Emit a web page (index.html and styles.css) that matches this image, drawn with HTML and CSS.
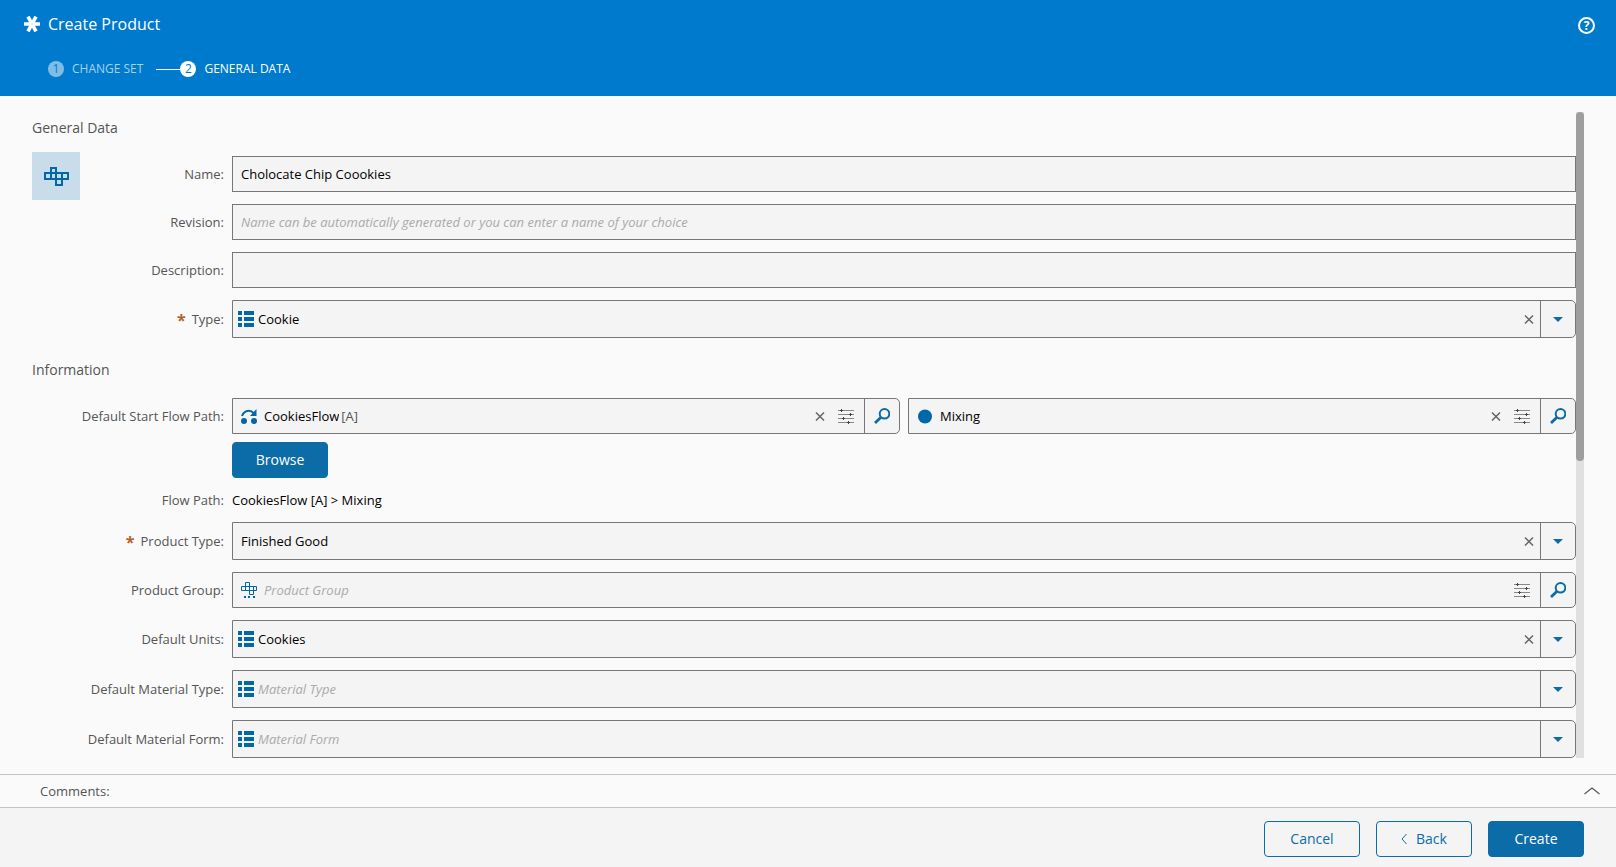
FILE: index.html
```
<!DOCTYPE html>
<html lang="en">
<head>
    <meta charset="UTF-8">
    <title>Create Product</title>
    <link rel="stylesheet" href="styles.css">
</head>
<body>
    <!-- shared icons -->
    <svg class="sprite" aria-hidden="true">
        <symbol id="list" viewBox="0 0 16 16">
            <path fill="#0067a8" d="M0 0h4v4H0zM6 0h10v4H6zM0 6h4v4H0zM6 6h10v4H6zM0 12h4v4H0zM6 12h10v4H6z"/>
        </symbol>
        <symbol id="close" viewBox="0 0 10 10">
            <path fill="none" stroke="#666" stroke-width="1.500" d="M1 1.500l8 8M9 1.500l-8 8"/>
        </symbol>
        <symbol id="sliders" viewBox="0 0 16 16">
            <path fill="none" stroke="#888" d="M0 2.500h16M0 6.500h16M0 10.500h16M0 14.500h16"/>
            <path fill="#444" d="M3 1h1v3H3zM2 2h3v1H2zM12 5h1v3h-1zM11 6h3v1h-3zM5 9h1v3H5zM4 10h3v1H4zM10 13h1v3h-1zM9 14h3v1H9z"/>
        </symbol>
        <symbol id="search" viewBox="0 0 16 16">
            <circle cx="10.500" cy="5.800" r="4.800" fill="none" stroke="#0c6ca8" stroke-width="2"/>
            <path fill="none" stroke="#0c6ca8" stroke-width="2.800" d="M7 9.300L1 15"/>
        </symbol>
        <symbol id="arrow" viewBox="0 0 10 5">
            <path fill="#0c6ca8" d="M0 0h10L5 5z"/>
        </symbol>
    </svg>

    <header class="header">
        <div class="header-main">
            <div class="title">
                <svg class="icon" viewBox="0 0 16 16"><path stroke="#fff" stroke-width="3.600" d="M0 8h16M4 .6l8 14.800M12 .6L4 15.400"/></svg>
                <h1>Create Product</h1>
            </div>
            <div class="steps">
                <span class="step done"><span class="step-number">1</span>CHANGE SET</span>
                <span class="step-line"></span>
                <span class="step"><span class="step-number">2</span>GENERAL DATA</span>
            </div>
        </div>
        <button class="help" aria-label="Help">?</button>
    </header>

    <main class="content">
        <form class="form">
            <h2>General Data</h2>
            <div class="general">
                <div class="product-icon">
                    <svg viewBox="0 0 26 20"><path fill="none" stroke="#0067a8" stroke-width="2" d="M2 7h23v6H2zM8 13V2h5v17h6V7"/></svg>
                </div>
                <div class="fields">
                    <div class="row">
                        <label for="name">Name:</label>
                        <input class="text-input" id="name" type="text" value="Cholocate Chip Coookies">
                    </div>
                    <div class="row">
                        <label for="revision">Revision:</label>
                        <input class="text-input" id="revision" type="text" placeholder="Name can be automatically generated or you can enter a name of your choice">
                    </div>
                    <div class="row">
                        <label for="description">Description:</label>
                        <input class="text-input" id="description" type="text">
                    </div>
                    <div class="row">
                        <label for="type"><span class="required">*</span>Type:</label>
                        <div class="combo select-combo">
                            <svg class="icon"><use href="#list"/></svg>
                            <select id="type"><option>Cookie</option></select>
                            <button type="button" class="clear" aria-label="Clear"><svg><use href="#close"/></svg></button>
                            <button type="button" class="combo-button" aria-label="Open"><svg class="arrow"><use href="#arrow"/></svg></button>
                        </div>
                    </div>
                </div>
            </div>

            <h2>Information</h2>
            <div class="fields">
                <div class="row">
                    <label for="flow">Default Start Flow Path:</label>
                    <div class="pair">
                        <div class="combo">
                            <svg class="icon" viewBox="0 0 16 16">
                                <g fill="#0067a8"><circle cx="3" cy="13" r="3"/><circle cx="13" cy="13" r="3"/><path d="M15.500 1v7H9z"/></g>
                                <path fill="none" stroke="#0067a8" stroke-width="2" d="M1 8C3 2.500 9 1 13 5.500"/>
                            </svg>
                            <input id="flow" class="fit" type="text" value="CookiesFlow">
                            <span class="version">[A]</span>
                            <button type="button" class="clear" aria-label="Clear"><svg><use href="#close"/></svg></button>
                            <button type="button" class="filter" aria-label="Filter"><svg class="icon"><use href="#sliders"/></svg></button>
                            <button type="button" class="combo-button" aria-label="Search"><svg class="icon"><use href="#search"/></svg></button>
                        </div>
                        <div class="combo">
                            <svg class="icon" viewBox="0 0 16 16"><circle cx="8" cy="8.500" r="7" fill="#0067a8"/></svg>
                            <input type="text" aria-label="Flow step" value="Mixing">
                            <button type="button" class="clear" aria-label="Clear"><svg><use href="#close"/></svg></button>
                            <button type="button" class="filter" aria-label="Filter"><svg class="icon"><use href="#sliders"/></svg></button>
                            <button type="button" class="combo-button" aria-label="Search"><svg class="icon"><use href="#search"/></svg></button>
                        </div>
                    </div>
                </div>
                <div class="row browse-row">
                    <button type="button" class="button primary">Browse</button>
                </div>
                <div class="row">
                    <span class="label">Flow Path:</span>
                    <span class="value">CookiesFlow [A] &gt; Mixing</span>
                </div>
                <div class="row">
                    <label for="product-type"><span class="required">*</span>Product Type:</label>
                    <div class="combo select-combo no-icon">
                        <select id="product-type"><option>Finished Good</option></select>
                        <button type="button" class="clear" aria-label="Clear"><svg><use href="#close"/></svg></button>
                        <button type="button" class="combo-button" aria-label="Open"><svg class="arrow"><use href="#arrow"/></svg></button>
                    </div>
                </div>
                <div class="row">
                    <label for="group">Product Group:</label>
                    <div class="combo">
                        <svg class="icon" viewBox="0 0 16 16">
                            <path fill="none" stroke="#0067a8" d="M.5 4.500h15v4H.5zM4.500 8.500v-4M4.500 4.500v-4h4v12h4v-8"/>
                            <path fill="#0067a8" d="M3 14h2v2H3zM7 14h2v2H7zM12 14h2v2h-2z"/>
                        </svg>
                        <input id="group" type="text" placeholder="Product Group">
                        <button type="button" class="filter" aria-label="Filter"><svg class="icon"><use href="#sliders"/></svg></button>
                        <button type="button" class="combo-button" aria-label="Search"><svg class="icon"><use href="#search"/></svg></button>
                    </div>
                </div>
                <div class="row">
                    <label for="units">Default Units:</label>
                    <div class="combo select-combo">
                        <svg class="icon"><use href="#list"/></svg>
                        <select id="units"><option>Cookies</option></select>
                        <button type="button" class="clear" aria-label="Clear"><svg><use href="#close"/></svg></button>
                        <button type="button" class="combo-button" aria-label="Open"><svg class="arrow"><use href="#arrow"/></svg></button>
                    </div>
                </div>
                <div class="row">
                    <label for="material-type">Default Material Type:</label>
                    <div class="combo select-combo">
                        <svg class="icon"><use href="#list"/></svg>
                        <select id="material-type" class="empty"><option>Material Type</option></select>
                        <button type="button" class="combo-button" aria-label="Open"><svg class="arrow"><use href="#arrow"/></svg></button>
                    </div>
                </div>
                <div class="row">
                    <label for="material-form">Default Material Form:</label>
                    <div class="combo select-combo">
                        <svg class="icon"><use href="#list"/></svg>
                        <select id="material-form" class="empty"><option>Material Form</option></select>
                        <button type="button" class="combo-button" aria-label="Open"><svg class="arrow"><use href="#arrow"/></svg></button>
                    </div>
                </div>
            </div>
        </form>
        <div class="scrollbar"><div class="thumb"></div></div>
    </main>

    <div class="comments">
        <span>Comments:</span>
        <button class="expand" aria-label="Show comments"><svg viewBox="0 0 16 8"><path fill="none" stroke="#555" stroke-width="1.200" d="M.5 7L8 1l7.500 6"/></svg></button>
    </div>

    <footer class="footer">
        <button class="button">Cancel</button>
        <button class="button"><svg class="back-icon" viewBox="0 0 6 10"><path fill="none" stroke="#0c6ca8" d="M5.500 0L1 5l4.500 5"/></svg>Back</button>
        <button class="button primary">Create</button>
    </footer>
</body>
</html>
```
FILE: styles.css
```
* {
    box-sizing: border-box;
}
body {
    display: flex;
    flex-direction: column;
    height: 100vh;
    margin: 0;
    background-color: #fafafa;
    color: #555;
    font-family: "Open Sans", "Noto Sans", sans-serif;
    font-size: 13px;
    line-height: 20px;
}
button, input, select {
    margin: 0;
    padding: 0;
    border: none;
    background: none;
    font: inherit;
}
svg {
    display: block;
    flex: none;
}
.sprite {
    position: absolute;
    width: 0;
    height: 0;
}
.icon {
    width: 16px;
    height: 16px;
}

/* header */
.header {
    display: flex;
    flex: none;
    justify-content: space-between;
    align-items: flex-start;
    height: 96px;
    padding: 14px 21px 0 24px;
    background-color: #007acc;
    color: #fff;
}
.title {
    display: flex;
    align-items: center;
    gap: 8px;
}
.title h1 {
    margin: 0;
    font-size: 16px;
    font-weight: 400;
}
.steps {
    display: flex;
    align-items: center;
    margin: 25px 0 0 24px;
    font-size: 12px;
}
.step {
    display: flex;
    align-items: center;
    gap: 8px;
}
.step-number {
    width: 16px;
    height: 16px;
    border-radius: 50%;
    background-color: #fff;
    color: #007acc;
    font-size: 12px;
    line-height: 16px;
    text-align: center;
}
.done {
    color: #a6d1f0;
}
.done .step-number {
    background-color: #80bde6;
}
.step-line {
    width: 24px;
    height: 1px;
    margin-left: 13px;
    background-color: #fff;
}
.help {
    width: 17px;
    height: 17px;
    margin-top: 3px;
    border: 2px solid #fff;
    border-radius: 50%;
    color: #fff;
    font-size: 12px;
    font-weight: 700;
    line-height: 13px;
}

/* form */
.content {
    display: flex;
    flex: 1;
    min-height: 0;
    padding: 16px 32px;
}
.form {
    flex: 1;
    overflow: hidden;
}
.scrollbar {
    width: 8px;
    background-color: #e0e0e0;
}
.thumb {
    height: 54%;
    border-radius: 4px;
    background-color: #9e9e9e;
}
h2 {
    margin: 22px 0 18px;
    font-size: 14px;
    font-weight: 500;
    line-height: 20px;
}
h2:first-child {
    margin: 6px 0 14px;
}
.general {
    display: flex;
}
.product-icon {
    display: flex;
    flex: none;
    justify-content: center;
    align-items: center;
    width: 48px;
    height: 48px;
    margin-right: -48px;
    background-color: #c8dcea;
}
.product-icon svg {
    width: 26px;
    height: 20px;
}
.fields {
    display: flex;
    flex: 1;
    flex-direction: column;
    gap: 12px;
}
.general .fields {
    padding-top: 4px;
}
.row {
    display: flex;
    align-items: center;
}
.row label, .label {
    flex: none;
    width: 192px;
    margin-right: 8px;
    text-align: right;
}
.value {
    color: #000;
}
.required {
    margin-right: 6px;
    color: #b5602a;
    font-size: 16px;
    font-weight: 700;
    line-height: 16px;
    vertical-align: -2px;
}
.text-input {
    flex: 1;
    height: 36px;
    padding: 0 8px;
    border: 1px solid #777;
    background-color: #f4f4f4;
}
::placeholder {
    color: #aaa;
    font-style: italic;
    opacity: 1;
}
.pair {
    display: flex;
    flex: 1;
    gap: 8px;
}
.combo {
    display: flex;
    flex: 1;
    align-items: center;
    height: 36px;
    padding-left: 8px;
    border: 1px solid #777;
    border-radius: 0 5px 5px 0;
    background-color: #f4f4f4;
}
.select-combo {
    height: 38px;
    padding-left: 5px;
}
.no-icon {
    padding-left: 4px;
}
.combo input {
    flex: 1;
    min-width: 0;
    padding-left: 7px;
}
.combo .fit {
    flex: none;
    field-sizing: content;
}
.version {
    flex: 1;
    padding-left: 2px;
}
.combo select {
    flex: 1;
    padding-left: 4px;
    appearance: none;
}
.combo .empty {
    color: #aaa;
    font-style: italic;
}
.clear {
    margin-right: 13px;
}
.clear svg {
    width: 10px;
    height: 10px;
}
.filter {
    margin-right: 10px;
}
.select-combo .clear {
    margin-right: 6px;
}
.combo-button {
    display: flex;
    justify-content: center;
    align-items: center;
    align-self: stretch;
    width: 35px;
    border-left: 1px solid #777;
}
.arrow {
    width: 10px;
    height: 5px;
}
.browse-row {
    margin-top: -4px;
    padding-left: 200px;
}

/* buttons */
.button {
    display: flex;
    justify-content: center;
    align-items: center;
    gap: 9px;
    width: 96px;
    height: 36px;
    border: 1px solid #0c6ca8;
    border-radius: 4px;
    color: #0c6ca8;
    font-size: 14px;
}
.primary {
    background-color: #0c6ca8;
    color: #fff;
}
.back-icon {
    width: 6px;
    height: 10px;
}

.comments {
    display: flex;
    flex: none;
    justify-content: space-between;
    align-items: center;
    height: 34px;
    padding: 0 16px 0 40px;
    border-top: 1px solid #c4c4c4;
    border-bottom: 1px solid #c4c4c4;
}
.expand svg {
    width: 16px;
    height: 8px;
}
.footer {
    display: flex;
    flex: none;
    justify-content: flex-end;
    gap: 16px;
    height: 59px;
    padding: 13px 32px 0;
    background-color: #f4f4f4;
}
```
